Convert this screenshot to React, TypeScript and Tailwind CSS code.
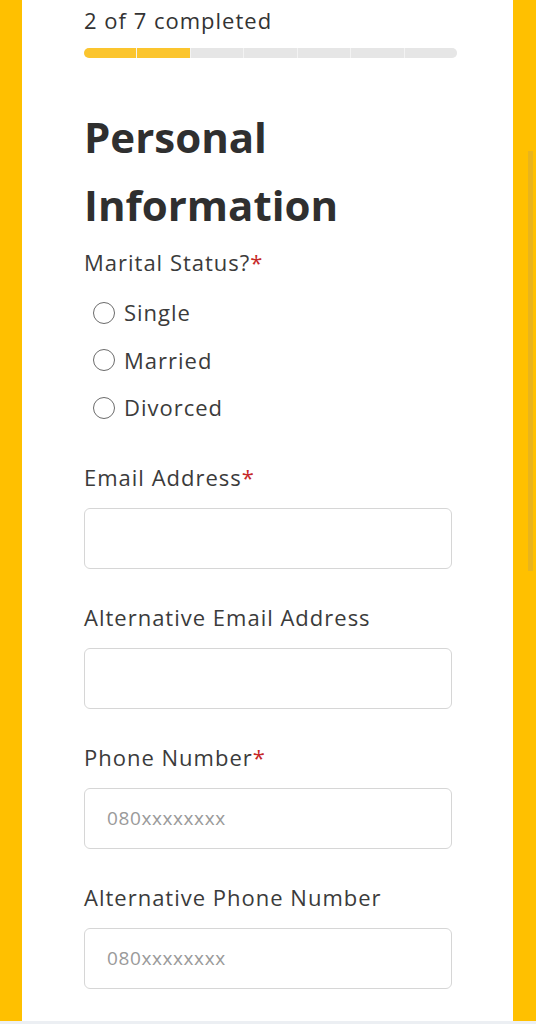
import { useState } from 'react';

const font = { fontFamily: '"Open Sans", "Liberation Sans", sans-serif' };

function Label({ text, required }: { text: string; required?: boolean }) {
  return (
    <p className="text-[22px] leading-[28px] tracking-[1px] text-[#3b3b3b]">
      {text}
      {required && <span className="text-[#c62828]">*</span>}
    </p>
  );
}

function Field({ label, required, placeholder }: { label: string; required?: boolean; placeholder?: string }) {
  return (
    <div>
      <Label text={label} required={required} />
      <input
        placeholder={placeholder}
        className="mt-[17px] block h-[61px] w-[368px] rounded-[6px] border border-[#d6d6d6] bg-white px-[22px] text-[19px] tracking-[0.6px] text-[#333] outline-none placeholder:text-[#9a9a9a]"
      />
    </div>
  );
}

export default function App() {
  const [status, setStatus] = useState('');
  const steps = [1, 2, 3, 4, 5, 6, 7];

  return (
    <div className="flex h-[1024px] w-[536px] flex-col overflow-hidden bg-[#ffc000]" style={font}>
      <div className="flex flex-1">
        <div className="w-[22px] shrink-0" />
        <div className="w-[491px] shrink-0 bg-white pl-[62px] pt-[6px]">
          <p className="text-[22px] leading-[28px] tracking-[1px] text-[#333]">2 of 7 completed</p>
          <div className="mt-[14px] flex h-[10px] w-[373px] gap-px overflow-hidden rounded-full bg-[#f3f3f3]">
            {steps.map((s) => (
              <div key={s} className={`flex-1 ${s <= 2 ? 'bg-[#fbc52e]' : 'bg-[#e6e6e6]'}`} />
            ))}
          </div>

          <h1 className="mt-[45px] text-[42px] font-bold leading-[68px] text-[#2f2f2f]">
            Personal
            <br />
            Information
          </h1>

          <div className="mt-[9px]">
            <Label text="Marital Status?" required />
          </div>
          <div className="mt-[13px] flex flex-col pl-[9px]">
            {['Single', 'Married', 'Divorced'].map((opt) => (
              <label key={opt} className="flex h-[47.5px] cursor-pointer items-center gap-[9px]" onClick={() => setStatus(opt)}>
                <span className="flex h-[22px] w-[22px] items-center justify-center rounded-full border-[1.5px] border-[#6b6b6b]">
                  {status === opt && <span className="h-[12px] w-[12px] rounded-full bg-[#6b6b6b]" />}
                </span>
                <span className="text-[22px] tracking-[1px] text-[#3b3b3b]">{opt}</span>
              </label>
            ))}
          </div>

          <div className="mt-[31px] flex flex-col gap-[34px]">
            <Field label="Email Address" required />
            <Field label="Alternative Email Address" />
            <Field label="Phone Number" required placeholder="080xxxxxxxx" />
            <Field label="Alternative Phone Number" placeholder="080xxxxxxxx" />
          </div>
        </div>
        <div className="flex flex-1">
          <div className="ml-[15px] mt-[151px] h-[420px] w-[5px] bg-[#e9b51c]" />
        </div>
      </div>
      <div className="h-[3px] bg-[#eceff3]" />
    </div>
  );
}
